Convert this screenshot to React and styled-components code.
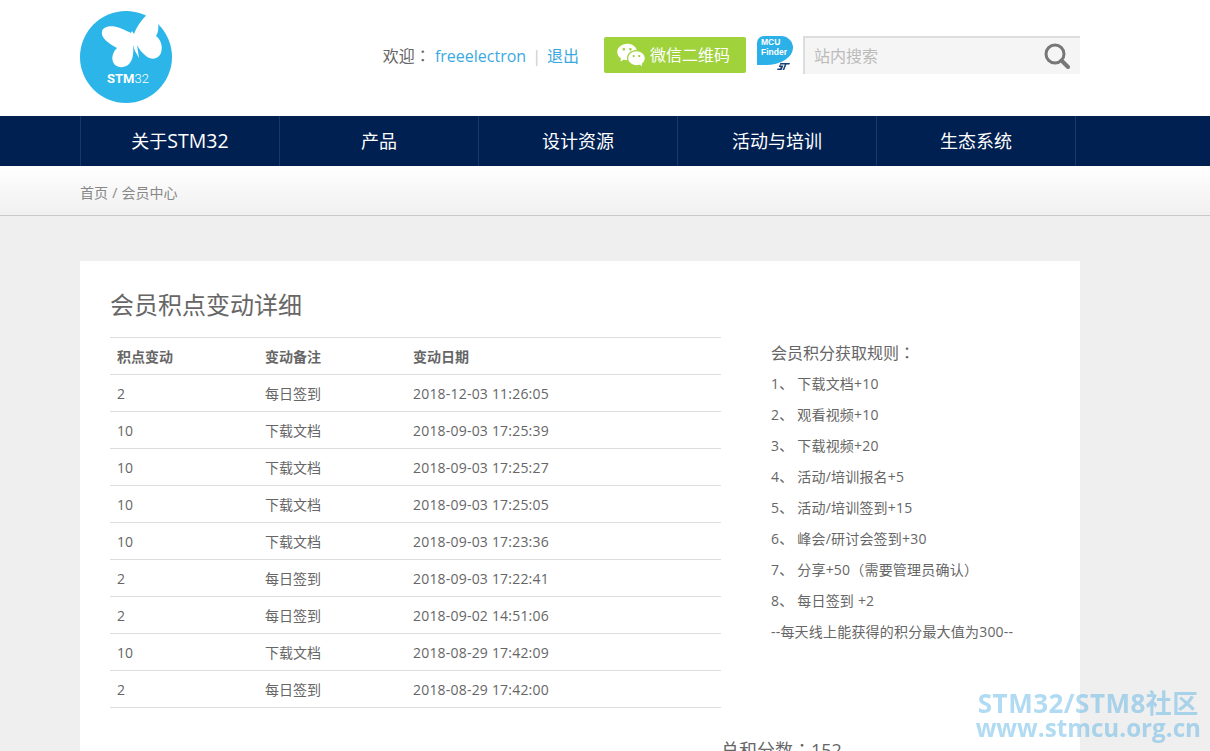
import React from "react";
import styled, { createGlobalStyle } from "styled-components";
import { RiWechatFill } from "react-icons/ri";

const FONT = '"Open Sans", "Noto Sans CJK SC", sans-serif';

const navItems = ["关于STM32", "产品", "设计资源", "活动与培训", "生态系统"];

const records = [
  ["2", "每日签到", "2018-12-03 11:26:05"],
  ["10", "下载文档", "2018-09-03 17:25:39"],
  ["10", "下载文档", "2018-09-03 17:25:27"],
  ["10", "下载文档", "2018-09-03 17:25:05"],
  ["10", "下载文档", "2018-09-03 17:23:36"],
  ["2", "每日签到", "2018-09-03 17:22:41"],
  ["2", "每日签到", "2018-09-02 14:51:06"],
  ["10", "下载文档", "2018-08-29 17:42:09"],
  ["2", "每日签到", "2018-08-29 17:42:00"],
];

const rules = [
  "1、 下载文档+10",
  "2、 观看视频+10",
  "3、 下载视频+20",
  "4、 活动/培训报名+5",
  "5、 活动/培训签到+15",
  "6、 峰会/研讨会签到+30",
  "8、 每日签到 +2",
];

function Logo() {
  return (
    <LogoSvg viewBox="0 0 92 92" width="92" height="92">
      <circle cx="46" cy="46" r="46" fill="#2bb5e8" />
      <path
        fill="#fff"
        d="M22 20 C24 15 32 14 40 17 C45 19 49 21 51 22 L52 20 L54 23 C57 15 62 8 68 3 L78 12 C79 17 78 22 76 25 C81 29 83 35 81 42 C78 49 71 49 66 45 C62 42 59 38 57 34 L59 47 L55 40 L53 34 C54 42 53 50 48 54 C42 58 35 56 33 51 C31 45 34 40 37 37 C30 33 20 27 22 20 Z"
      />
      <text x="27" y="72" fill="#fff" fontFamily="Roboto, sans-serif" fontSize="13" fontWeight="700">
        STM<tspan fontWeight="300">32</tspan>
      </text>
    </LogoSvg>
  );
}

function FinderBadge() {
  return (
    <Finder>
      <FinderBubble>
        MCU
        <br />
        Finder
      </FinderBubble>
      <svg viewBox="0 0 13 7" width="13" height="7">
        <path fill="#1a3e7a" d="M3.4 0 H13 L12.4 1.4 H9.4 L7.2 7 H5.6 L7.8 1.4 H3.6 L3.4 2.6 H6.4 L4.6 7 H0 L0.6 5.6 H3.2 L3.6 4 H1.8 Z" />
      </svg>
    </Finder>
  );
}

export default function App() {
  return (
    <>
      <GlobalStyle />
      <Header>
        <Logo />
        <HeaderTools>
          <Welcome>
            欢迎<Punct>：</Punct> <UserLink>freeelectron</UserLink>
            <Divider>|</Divider>
            <UserLink>退出</UserLink>
          </Welcome>
          <WechatButton>
            <RiWechatFill size={30} />
            <span>微信二维码</span>
          </WechatButton>
          <FinderBadge />
          <SearchBox>
            <SearchInput placeholder="站内搜索" />
            <svg viewBox="0 0 26 26" width="26" height="26">
              <circle cx="11" cy="11" r="9" fill="none" stroke="#777" strokeWidth="3" />
              <path d="M17.5 17.5 L24 24" stroke="#777" strokeWidth="4" strokeLinecap="round" />
            </svg>
          </SearchBox>
        </HeaderTools>
      </Header>

      <NavBar>
        <NavList>
          {navItems.map((item) => (
            <NavItem key={item}>
              {item.includes("STM32") ? (
                <>
                  关于<NavLatin>STM32</NavLatin>
                </>
              ) : (
                item
              )}
            </NavItem>
          ))}
        </NavList>
      </NavBar>

      <Crumbs>首页 / 会员中心</Crumbs>

      <Main>
        <Card>
          <Title>会员积点变动详细</Title>
          <Columns>
            <Table>
              <thead>
                <tr>
                  <Th>积点变动</Th>
                  <Th>变动备注</Th>
                  <Th>变动日期</Th>
                </tr>
              </thead>
              <tbody>
                {records.map((row) => (
                  <tr key={row[2]}>
                    <Td>{row[0]}</Td>
                    <Td>{row[1]}</Td>
                    <DateCell>{row[2]}</DateCell>
                  </tr>
                ))}
              </tbody>
            </Table>
            <Rules>
              <RulesTitle>
                会员积分获取规则<Punct>：</Punct>
              </RulesTitle>
              {rules.slice(0, 6).map((rule) => (
                <Rule key={rule}>{rule}</Rule>
              ))}
              <Rule>
                7、 分享+50<Punct>（</Punct>需要管理员确认<Punct>）</Punct>
              </Rule>
              <Rule>{rules[6]}</Rule>
              <Rule>--每天线上能获得的积分最大值为300--</Rule>
            </Rules>
          </Columns>
          <Total>
            总和分数<Punct>：</Punct>152
          </Total>
        </Card>
      </Main>

      <Watermark>
        <WatermarkTop>STM32/STM8社区</WatermarkTop>
        <WatermarkBottom>www.stmcu.org.cn</WatermarkBottom>
      </Watermark>
    </>
  );
}

const GlobalStyle = createGlobalStyle`
  html, body {
    margin: 0;
    height: 751px;
    overflow: hidden;
    background: #efefef;
    color: #666;
    font-family: ${FONT};
  }
`;

// the traditional-Chinese cut centres its full-width punctuation like the reference
const Punct = styled.span`
  font-family: "Noto Sans CJK TC", sans-serif;
`;

const Header = styled.header`
  height: 116px;
  box-sizing: border-box;
  padding: 11px 130px 0 80px;
  background: #fff;
  display: flex;
  justify-content: space-between;
  align-items: flex-start;
`;

const LogoSvg = styled.svg`
  display: block;
  overflow: visible;
`;

const HeaderTools = styled.div`
  display: flex;
  align-items: flex-start;
  margin-top: 25px;
`;

const Welcome = styled.div`
  font-size: 16px;
  line-height: 38px;
  margin-right: 25px;
  white-space: pre;
`;

const UserLink = styled.a`
  color: #3ba9e1;
`;

const Divider = styled.span`
  color: #ccc;
  margin: 0 6px;
  font-size: 16px;
`;

const WechatButton = styled.div`
  width: 142px;
  height: 36px;
  margin-top: 1px;
  box-sizing: border-box;
  padding-left: 12px;
  border-radius: 2px;
  background: #9fd23b;
  color: #fff;
  font-size: 16px;
  display: flex;
  align-items: center;
  gap: 4px;
  span {
    margin-top: -2px;
  }
`;

const Finder = styled.div`
  width: 36px;
  margin-left: 11px;
  margin-right: 10px;
  display: flex;
  flex-direction: column;
  align-items: flex-end;
  svg {
    margin: -2px 3px 0 0;
  }
`;

const FinderBubble = styled.div`
  width: 36px;
  height: 29px;
  box-sizing: border-box;
  padding: 2px 0 0 4px;
  background: #2bb0e8;
  color: #fff;
  font: 700 8.5px/9.5px "Liberation Sans", sans-serif;
  border-radius: 8px 14px 32px 0 / 8px 14px 20px 0;
`;

const SearchBox = styled.div`
  width: 277px;
  height: 38px;
  box-sizing: border-box;
  border-top: 2px solid #ddd;
  border-left: 2px solid #ddd;
  background: #f5f5f5;
  display: flex;
  align-items: center;
  padding: 0 10px 0 9px;
`;

const SearchInput = styled.input`
  flex: 1;
  min-width: 0;
  border: 0;
  outline: 0;
  padding: 0;
  background: transparent;
  font: 16px ${FONT};
  &::placeholder {
    color: #bbb;
    opacity: 1;
  }
`;

const NavBar = styled.nav`
  height: 50px;
  padding-left: 80px;
  background: #002052;
`;

const NavList = styled.div`
  display: flex;
  width: 996px;
  border-left: 1px solid #143a6b;
`;

const NavItem = styled.div`
  width: 198px;
  height: 50px;
  border-right: 1px solid #143a6b;
  color: #fff;
  font-size: 18px;
  line-height: 50px;
  text-align: center;
`;

const NavLatin = styled.span`
  font-size: 19.5px;
`;

const Crumbs = styled.div`
  height: 50px;
  box-sizing: border-box;
  padding-left: 80px;
  border-bottom: 1px solid #c8c8c8;
  background: linear-gradient(#fff, #f0f0f0);
  color: #888;
  font-size: 14px;
  line-height: 54px;
  word-spacing: 0.5px;
`;

const Main = styled.main`
  padding: 45px 130px 0 80px;
`;

const Card = styled.section`
  background: #fff;
  padding: 28px 30px 30px;
  height: 600px;
`;

const Title = styled.h1`
  margin: 0 0 17px;
  font-size: 24px;
  font-weight: 400;
  line-height: 31px;
  color: #666;
`;

const Columns = styled.div`
  display: flex;
  gap: 50px;
`;

const Table = styled.table`
  width: 611px;
  flex: none;
  border-collapse: collapse;
  table-layout: fixed;
  border-top: 1px solid #ddd;
  th:nth-child(-n + 2) {
    width: 134px;
  }
`;

const Th = styled.th`
  height: 36px;
  padding: 0 7px;
  border-bottom: 1px solid #ddd;
  font-size: 14px;
  font-weight: 700;
  text-align: left;
  color: #666;
`;

const Td = styled.td`
  height: 36px;
  padding: 0 7px;
  border-bottom: 1px solid #ddd;
  font-size: 14px;
  color: #666;
`;

const DateCell = styled(Td)`
  letter-spacing: 0.2px;
`;

const Rules = styled.div`
  letter-spacing: 0.2px;
`;

const RulesTitle = styled.div`
  font-size: 16px;
  line-height: 30px;
  letter-spacing: 0;
`;

const Rule = styled.div`
  font-size: 14px;
  line-height: 31px;
  white-space: nowrap;
`;

const Total = styled.div`
  margin: 29px 0 0 611px;
  font-size: 18px;
  line-height: 24px;
`;

const Watermark = styled.div`
  position: fixed;
  right: 9px;
  bottom: 10px;
  text-align: center;
  color: rgba(70, 170, 225, 0.42);
  font-weight: 700;
  white-space: nowrap;
`;

const WatermarkTop = styled.div`
  font-size: 26px;
  line-height: 23px;
  letter-spacing: 0.5px;
`;

const WatermarkBottom = styled.div`
  font-size: 24.2px;
  line-height: 26px;
`;
